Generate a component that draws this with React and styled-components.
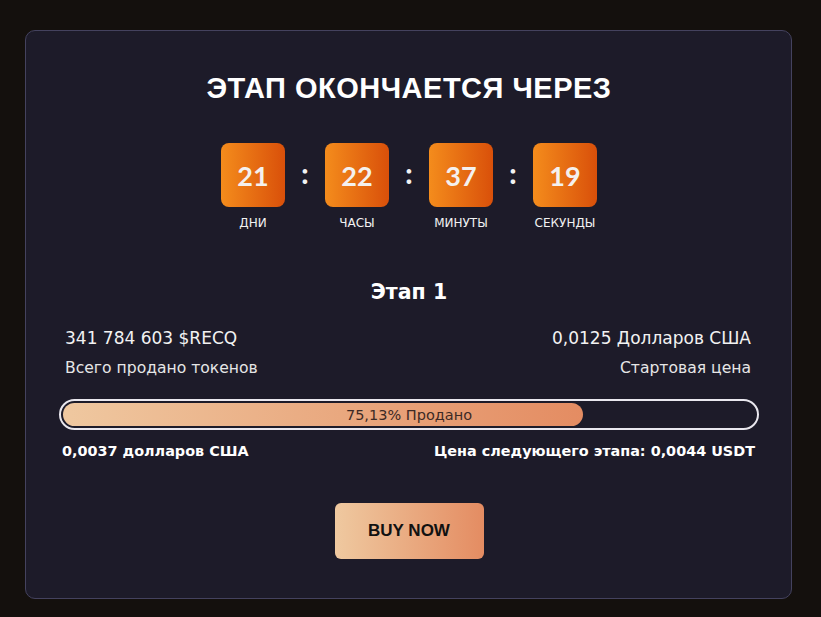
import React from "react";
import styled, { createGlobalStyle } from "styled-components";

const GlobalStyle = createGlobalStyle`
  html, body {
    margin: 0;
    padding: 0;
    background: #14100d;
  }
  * {
    box-sizing: border-box;
  }
`;

const units = [
  { value: "21", label: "ДНИ" },
  { value: "22", label: "ЧАСЫ" },
  { value: "37", label: "МИНУТЫ" },
  { value: "19", label: "СЕКУНДЫ" },
];

const sold = 75.13;

const App = () => {
  return (
    <Page>
      <GlobalStyle />
      <Card>
        <Title>ЭТАП ОКОНЧАЕТСЯ ЧЕРЕЗ</Title>
        <Timer>
          {units.map((u, i) => (
            <React.Fragment key={u.label}>
              {i > 0 && <Colon>:</Colon>}
              <Unit>
                <DigitBox>{u.value}</DigitBox>
                <UnitLabel>{u.label}</UnitLabel>
              </Unit>
            </React.Fragment>
          ))}
        </Timer>

        <StageTitle>Этап 1</StageTitle>

        <StatsRow>
          <Stat>
            <StatValue>341 784 603 $RECQ</StatValue>
            <StatLabel>Всего продано токенов</StatLabel>
          </Stat>
          <Stat $right>
            <StatValue>0,0125 Долларов США</StatValue>
            <StatLabel>Стартовая цена</StatLabel>
          </Stat>
        </StatsRow>

        <Progress>
          <ProgressFill style={{ width: `${sold}%` }} />
          <ProgressText>75,13% Продано</ProgressText>
        </Progress>

        <PriceRow>
          <span>0,0037 долларов США</span>
          <span>Цена следующего этапа: 0,0044 USDT</span>
        </PriceRow>

        <ButtonWrap>
          <BuyButton>BUY NOW</BuyButton>
        </ButtonWrap>
      </Card>
    </Page>
  );
};

const Page = styled.div`
  width: 821px;
  height: 617px;
  padding: 30px 29px 18px 25px;
  background: #14100d;
`;

const Card = styled.div`
  height: 569px;
  background: #1d1b29;
  border: 1px solid #44425e;
  border-radius: 10px;
  padding: 40px 32px 0 33px;
  display: flex;
  flex-direction: column;
  color: #ffffff;
  font-family: "DejaVu Sans", "Open Sans", sans-serif;
`;

const Title = styled.h1`
  margin: 0;
  text-align: center;
  font-family: "Liberation Sans", Arial, sans-serif;
  font-weight: 700;
  font-size: 29px;
  line-height: 34px;
  letter-spacing: 0.5px;
`;

const Timer = styled.div`
  display: flex;
  justify-content: center;
  align-items: flex-start;
  margin-top: 38px;
`;

const Unit = styled.div`
  width: 84px;
  display: flex;
  flex-direction: column;
  align-items: center;
`;

const DigitBox = styled.div`
  width: 64px;
  height: 64px;
  border-radius: 8px;
  background: linear-gradient(90deg, #f48c1c 0%, #d9500a 100%);
  display: flex;
  align-items: center;
  justify-content: center;
  font-family: Lato, "Open Sans", sans-serif;
  font-weight: 700;
  font-size: 27px;
  color: #f4f1ef;
`;

const UnitLabel = styled.div`
  margin-top: 8px;
  font-size: 12px;
  line-height: 16px;
  color: #f2f2f2;
`;

const Colon = styled.div`
  width: 20px;
  height: 64px;
  display: flex;
  align-items: center;
  justify-content: center;
  font-family: Lato, sans-serif;
  font-weight: 900;
  font-size: 28px;
  color: #f2f2f2;
  padding-bottom: 4px;
`;

const StageTitle = styled.h2`
  margin: 48px 0 0;
  text-align: center;
  font-weight: 700;
  font-size: 20.5px;
  line-height: 26px;
`;

const StatsRow = styled.div`
  display: flex;
  justify-content: space-between;
  margin-top: 22px;
  padding: 0 8px 0 6px;
`;

const Stat = styled.div`
  display: flex;
  flex-direction: column;
  align-items: ${(p) => (p.$right ? "flex-end" : "flex-start")};
`;

const StatValue = styled.div`
  font-size: 17px;
  line-height: 22px;
  color: #f2f2f2;
`;

const StatLabel = styled.div`
  margin-top: 9px;
  font-size: 15.6px;
  line-height: 20px;
  color: #e6e6e6;
`;

const Progress = styled.div`
  position: relative;
  margin-top: 21px;
  height: 31px;
  border: 2px solid #e9e7ee;
  border-radius: 16px;
  padding: 2px;
  display: flex;
  align-items: center;
`;

const ProgressFill = styled.div`
  height: 100%;
  border-radius: 12px;
  background: linear-gradient(90deg, #efc8a0 0%, #e48c62 100%);
`;

const ProgressText = styled.div`
  position: absolute;
  inset: 0;
  display: flex;
  align-items: center;
  justify-content: center;
  font-size: 14.5px;
  color: #3d2a25;
`;

const PriceRow = styled.div`
  display: flex;
  justify-content: space-between;
  margin-top: 10px;
  padding: 0 4px 0 3px;
  font-weight: 700;
  font-size: 14.4px;
  line-height: 22px;
  color: #ffffff;
`;

const ButtonWrap = styled.div`
  display: flex;
  justify-content: center;
  margin-top: 41px;
`;

const BuyButton = styled.button`
  width: 149px;
  height: 56px;
  border: none;
  border-radius: 6px;
  background: linear-gradient(90deg, #efc9a0 0%, #e48c62 100%);
  font-family: "Liberation Sans", Arial, sans-serif;
  font-weight: 700;
  font-size: 17px;
  color: #111111;
  cursor: pointer;
`;

export default App;
